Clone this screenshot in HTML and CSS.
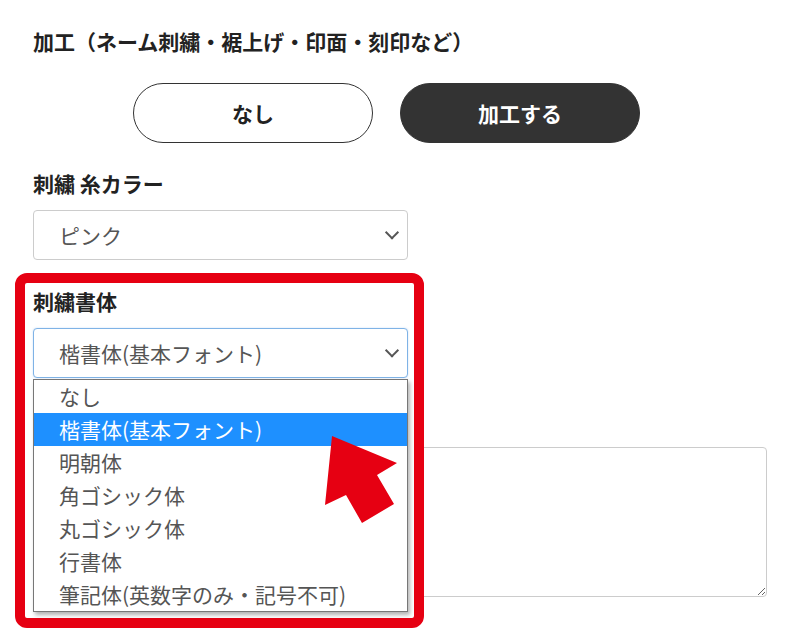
FILE: index.html
```html
<!DOCTYPE html>
<html lang="ja">
<head>
<meta charset="utf-8">
<title>加工</title>
<link rel="stylesheet" href="styles.css">
</head>
<body>
<main class="form">
  <h2 class="form-title">加工（ネーム刺繍・裾上げ・印面・刻印など）</h2>
  <div class="choice-row">
    <button class="choice" type="button">なし</button>
    <button class="choice choice--active" type="button">加工する</button>
  </div>

  <div class="field">
    <label class="field-label" for="thread">刺繍 糸カラー</label>
    <div class="select-wrap">
      <select class="select" id="thread"><option>ピンク</option></select>
    </div>
  </div>

  <div class="field field--highlight">
    <div class="annot-frame"></div>
    <label class="field-label" for="font">刺繍書体</label>
    <div class="select-wrap">
      <select class="select select--focus" id="font"><option>楷書体(基本フォント)</option></select>
      <ul class="dropdown">
        <li class="dropdown-item">なし</li>
        <li class="dropdown-item is-selected">楷書体(基本フォント)</li>
        <li class="dropdown-item">明朝体</li>
        <li class="dropdown-item">角ゴシック体</li>
        <li class="dropdown-item">丸ゴシック体</li>
        <li class="dropdown-item">行書体</li>
        <li class="dropdown-item">筆記体(英数字のみ・記号不可)</li>
      </ul>
    </div>
    <svg class="annot-arrow" width="73" height="88" viewBox="0 0 73 88" aria-hidden="true">
      <polygon points="7,0 72,27 52,39 69,68 37,87 21,59 0,69" fill="#e60012"/>
    </svg>
  </div>

  <div class="field field--text">
    <textarea class="textarea"></textarea>
  </div>
</main>
</body>
</html>
```

FILE: styles.css
```css
* {
  box-sizing: border-box;
}

html, body {
  margin: 0;
  background: #fff;
}

body {
  font-family: "Noto Sans CJK JP", "Noto Sans", sans-serif;
  color: #222;
}

.form {
  padding: 26px 27px 40px 33px;
}

.form-title {
  margin: 0;
  font-size: 21px;
  line-height: 30px;
  font-weight: 700;
  color: #222;
}

.choice-row {
  display: flex;
  gap: 27px;
  margin-top: 27px;
  padding-left: 100px;
}

.choice {
  width: 240px;
  height: 60px;
  border: 1px solid #333;
  border-radius: 30px;
  background: #fff;
  color: #222;
  font-family: inherit;
  font-size: 21px;
  font-weight: 700;
  line-height: 1;
  padding: 0;
}

.choice--active {
  background: #333;
  color: #fff;
}

.field {
  margin-top: 25px;
}

.field--highlight {
  position: relative;
  z-index: 1;
  margin-top: 26px;
}

.field--text {
  margin-top: 69px;
}

.field-label {
  display: block;
  margin-bottom: 12px;
  font-size: 21px;
  line-height: 30px;
  font-weight: 700;
  color: #222;
}

.select-wrap {
  position: relative;
  width: 375px;
}

.select-wrap::after {
  content: "";
  position: absolute;
  right: 11px;
  top: 50%;
  width: 8px;
  height: 8px;
  border-right: 2px solid #555;
  border-bottom: 2px solid #555;
  transform: translateY(-75%) rotate(45deg);
  pointer-events: none;
}

.select {
  display: block;
  width: 100%;
  height: 50px;
  padding: 0 40px 0 25px;
  border: 1px solid #ccc;
  border-radius: 4px;
  background: #fff;
  color: #555;
  font-family: inherit;
  font-size: 21px;
  -webkit-appearance: none;
  appearance: none;
}

.select--focus {
  border-color: #7fb3e6;
  box-shadow: 0 0 2px rgba(100, 160, 230, 0.35);
}

.dropdown {
  position: absolute;
  z-index: 2;
  left: 0;
  top: calc(100% + 1px);
  width: 375px;
  margin: 0;
  padding: 0;
  list-style: none;
  background: #fff;
  border: 1px solid #777;
  box-shadow: 2px 3px 4px rgba(0, 0, 0, 0.3);
}

.dropdown-item {
  height: 33px;
  padding-left: 25px;
  font-size: 21px;
  line-height: 33px;
  color: #555;
  white-space: nowrap;
}

.dropdown-item.is-selected {
  background: #1e90ff;
  color: #fff;
}

.annot-frame {
  position: absolute;
  z-index: -1;
  left: -18px;
  top: -13px;
  width: 409px;
  height: 355px;
  border: 10px solid #e60012;
  border-radius: 12px;
  background: #fff;
}

.annot-arrow {
  position: absolute;
  z-index: 3;
  left: 292px;
  top: 150px;
  display: block;
}

.textarea {
  display: block;
  width: 100%;
  height: 150px;
  border: 1px solid #ccc;
  border-radius: 4px;
  background: #fff;
  font-family: inherit;
  font-size: 18px;
}
```
